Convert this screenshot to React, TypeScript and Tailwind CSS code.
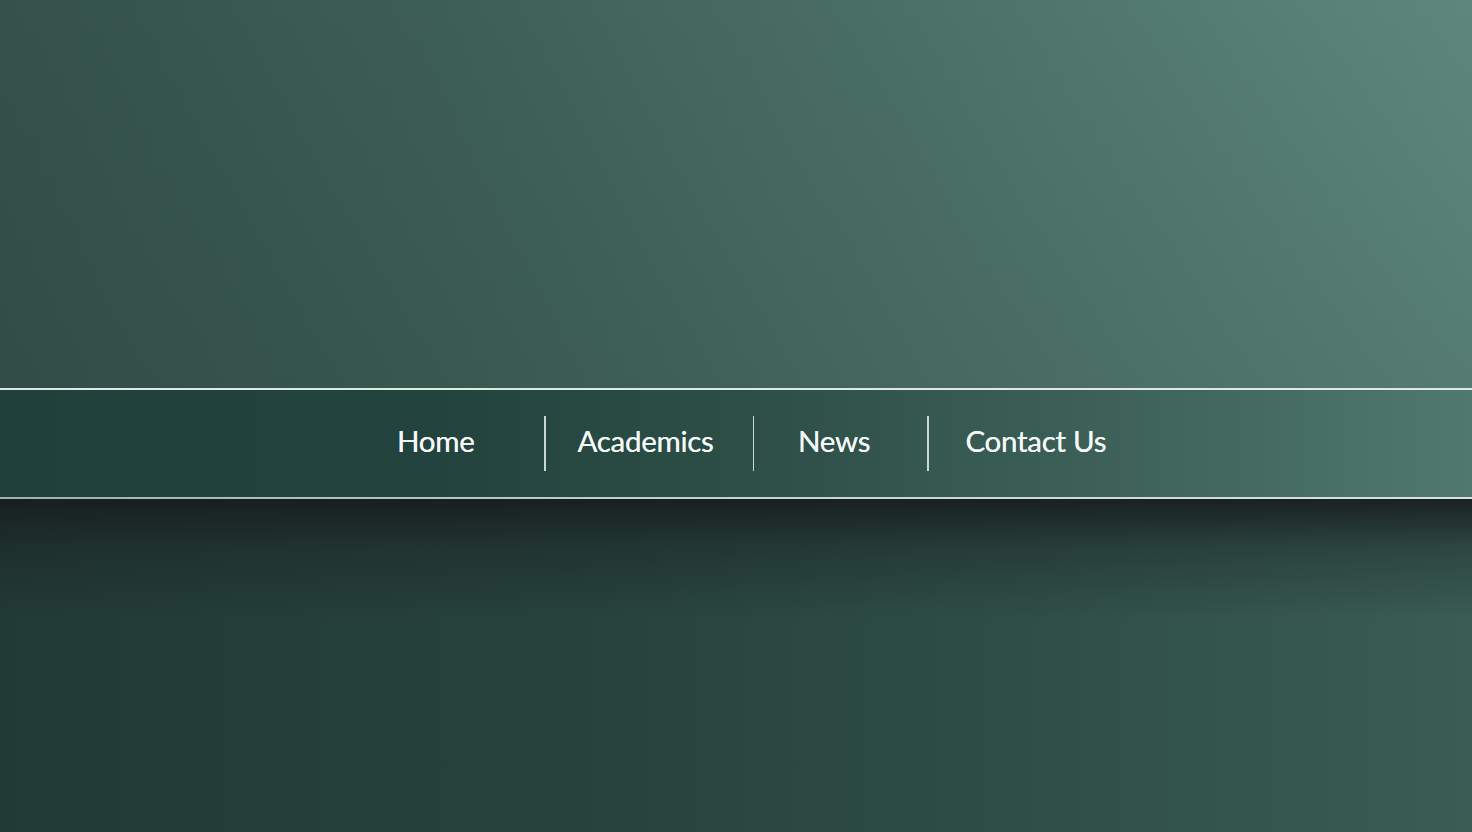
const NAV = [
  {label: "Home", cell: "w-[147px] pl-0"},
  {label: "Academics", cell: "w-[207px] pl-[32px]"},
  {label: "News", cell: "w-[173px] pl-[44px]"},
  {label: "Contact Us", cell: "pl-[37px]"},
];

function Separator() {
  return <div className="h-[55px] w-[1.5px] shrink-0 bg-[#c9d9d2]" />;
}

export default function App() {
  return (
    <div
      className="flex h-[832px] w-full flex-col overflow-hidden"
      style={{fontFamily: "Lato, 'Open Sans', sans-serif"}}
    >
      {/* upper wall */}
      <div className="relative h-[388px] w-full bg-[linear-gradient(to_right,#34514b_0%,#3d5e56_30%,#4a6f66_60%,#5e877c_100%)]">
        <div className="absolute inset-0 bg-[linear-gradient(to_bottom,rgba(20,40,36,0)_0%,rgba(20,40,36,0.12)_100%)]" />
      </div>

      {/* nav bar */}
      <div className="h-[2px] w-full bg-[#dfe9e4]" />
      <nav className="flex h-[107px] w-full items-center bg-[linear-gradient(to_right,#1f403b_0%,#23443e_30%,#2f5149_55%,#3d6158_75%,#50796d_100%)] pl-[397px]">
        {NAV.map((item, i) => (
          <div key={item.label} className="flex items-center">
            {i > 0 && <Separator />}
            <a
              href="#"
              className={`${item.cell} block pb-[5px] text-[29.5px] leading-none tracking-[-0.3px] text-[#f4f8f6] [text-shadow:0_0_0.6px_#f4f8f6]`}
            >
              {item.label}
            </a>
          </div>
        ))}
      </nav>
      <div className="h-[2px] w-full bg-[linear-gradient(to_right,#9fb0aa,#c7d3cf_50%,#d8e3de)]" />

      {/* lower wall */}
      <div className="relative flex-1 w-full bg-[linear-gradient(to_right,#223a36_0%,#27423d_40%,#2f4e48_70%,#3a5c55_100%)]">
        <div className="absolute inset-x-0 top-0 h-[120px] bg-[linear-gradient(to_bottom,rgba(22,28,28,0.9),rgba(22,28,28,0.35)_40%,rgba(22,28,28,0))]" />
      </div>
    </div>
  );
}
